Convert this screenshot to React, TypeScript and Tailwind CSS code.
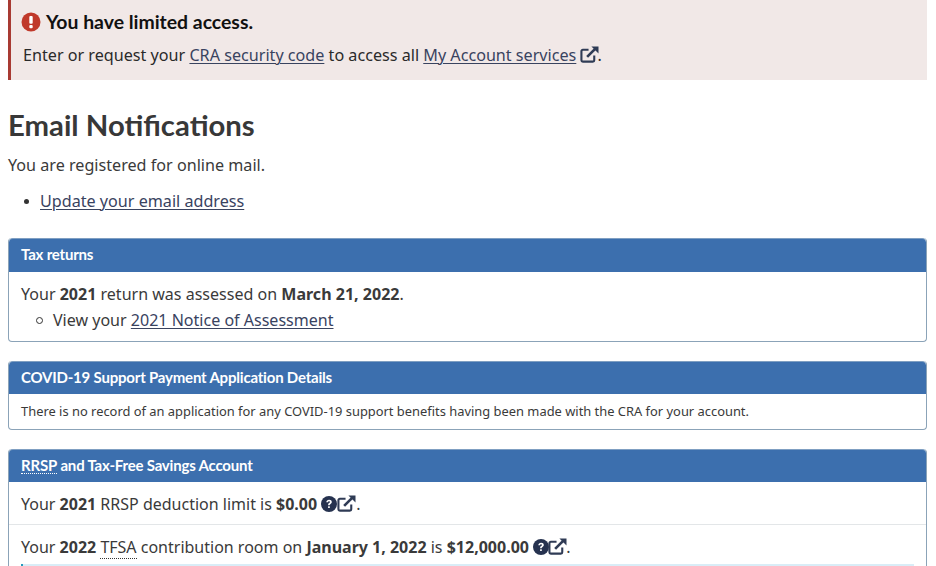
const noto = "font-['Noto_Sans',sans-serif]";

function ExternalIcon() {
  return (
    <svg viewBox="0 0 20 20" className="inline-block w-[19px] h-[19px] align-[-3px] text-[#2f3b55]" fill="none" stroke="currentColor">
      <path d="M15 11v5a1.500 1.500 0 0 1-1.500 1.500H3A1.500 1.500 0 0 1 1.500 16V6.500A1.500 1.500 0 0 1 3 5H9" strokeWidth="2.200" />
      <path d="M7.500 12.500L16.500 3.500" strokeWidth="2.800" />
      <path d="M12 1.500h7.500V9z" fill="currentColor" stroke="none" />
    </svg>
  );
}

function HelpIcon() {
  return (
    <svg viewBox="0 0 16 16" className="inline-block w-[16px] h-[16px] align-[-2px] text-[#26324f]">
      <circle cx="8" cy="8" r="8" fill="currentColor" />
      <path d="M5.300 6.200C5.400 4.600 6.500 3.700 8.100 3.700c1.600 0 2.700.9 2.700 2.300 0 1.200-.8 1.700-1.500 2.200-.5.3-.6.5-.6 1H7.100c0-1.200.4-1.700 1.100-2.100.5-.3.8-.6.8-1 0-.5-.4-.8-.9-.8-.6 0-1 .4-1 1z" fill="#ffffff" />
      <rect x="7.100" y="10.300" width="1.700" height="1.800" rx=".3" fill="#ffffff" />
    </svg>
  );
}

function AlertIcon() {
  return (
    <svg viewBox="0 0 20 20" className="w-[20px] h-[20px] shrink-0">
      <circle cx="10" cy="10" r="9.500" fill="#c0392b" />
      <rect x="8.300" y="4" width="3.400" height="7.800" rx="1" fill="#ffffff" />
      <rect x="8.300" y="13" width="3.400" height="3.200" rx="1" fill="#ffffff" />
    </svg>
  );
}

function A({ children }: { children: React.ReactNode }) {
  return <a href="#" className="text-[#39435f] underline underline-offset-2 decoration-1">{children}</a>;
}

function PanelHead({ children, tall }: { children: React.ReactNode; tall?: boolean }) {
  return (
    <div className={`${tall ? "h-[34px] pb-[2px]" : "h-[33px] pb-[1px]"} bg-[#3c6fae] rounded-t-[4px] border-t border-[#7f9fc2] flex items-center pl-[12px] font-['Lato',sans-serif] font-bold text-[15px] text-white tracking-[-0.2px]`}>
      {children}
    </div>
  );
}

export default function App() {
  return (
    <div className={`${noto} w-[936px] h-[566px] overflow-hidden bg-white pl-2 pr-[9px] text-[16.150px] text-[#3a3a3a]`}>
      <div className="h-[80px] bg-[#f1e8e7] border-l-[3px] border-[#a83a32] pl-[12px] pt-[10px]">
        <div className="flex items-center gap-[5px] -ml-[2px] h-[24px] font-['Lato',sans-serif] font-bold text-[19.400px] text-[#111111]">
          <AlertIcon />
          <span>You have limited access.</span>
        </div>
        <p className="mt-[9px] leading-[24px] text-[#2a2a2a]">
          Enter or request your <A>CRA security code</A> to access all <A>My Account services</A> <span className="-ml-[1px]"><ExternalIcon /></span><span className="-ml-[1px]">.</span>
        </p>
      </div>

      <h1 className="mt-[27px] h-[36px] leading-[36px] font-['Lato',sans-serif] font-bold text-[29.300px] text-[#383838]">Email Notifications</h1>
      <p className="mt-[10px] leading-[24px]">You are registered for online mail.</p>
      <ul className="mt-[12px] ml-[16px] leading-[24px]">
        <li className="flex items-center">
          <span className="w-[5px] h-[5px] rounded-full bg-[#333333] mr-[11px]" />
          <A>Update your email address</A>
        </li>
      </ul>

      <section className="mt-[25px] h-[104px] rounded-[4px] border border-[#8ba3b8] border-t-0 overflow-hidden text-[16.050px]">
        <PanelHead tall>Tax returns</PanelHead>
        <div className="px-[12px] pt-[9px] leading-[26px]">
          <p>Your <b>2021</b> return was assessed on <b>March 21, 2022</b>.</p>
          <div className="flex items-center ml-[15px]">
            <span className="w-[7px] h-[7px] rounded-full border border-[#333333] mr-[10px]" />
            <span>View your <A>2021 Notice of Assessment</A></span>
          </div>
        </div>
      </section>

      <section className="mt-[19px] h-[69px] rounded-[4px] border border-[#8ba3b8] border-t-0 overflow-hidden">
        <PanelHead>COVID-19 Support Payment Application Details</PanelHead>
        <p className="px-[12px] pt-[8px] text-[12.900px] leading-[18px]">
          There is no record of an application for any COVID-19 support benefits having been made with the CRA for your account.
        </p>
      </section>

      <section className="mt-[19px] rounded-t-[4px] border-x border-[#8ba3b8] text-[16px]">
        <PanelHead><abbr className="no-underline border-b border-dotted border-white leading-[15px]">RRSP</abbr><span>&nbsp;and Tax-Free Savings Account</span></PanelHead>
        <div className="h-[43px] border-b border-[#e3e6e8] px-[12px] pt-[1px] flex items-center">
          <p>Your <b>2021</b> RRSP deduction limit is <b>$0.00</b> <HelpIcon /><ExternalIcon />.</p>
        </div>
        <div className="px-[12px] pt-[10px]">
          <p className="leading-[24px] h-[29px]">Your <b>2022</b> <abbr className="no-underline border-b border-dotted border-[#333333]">TFSA</abbr> contribution room on <b>January 1, 2022</b> is <b>$12,000.00</b> <HelpIcon /><span className="-ml-[1px]"><ExternalIcon /></span><span className="-ml-[1px]">.</span></p>
          <div className="h-[2px] bg-[#d9edf7] border-l-2 border-[#269abc]" />
        </div>
      </section>
    </div>
  );
}
